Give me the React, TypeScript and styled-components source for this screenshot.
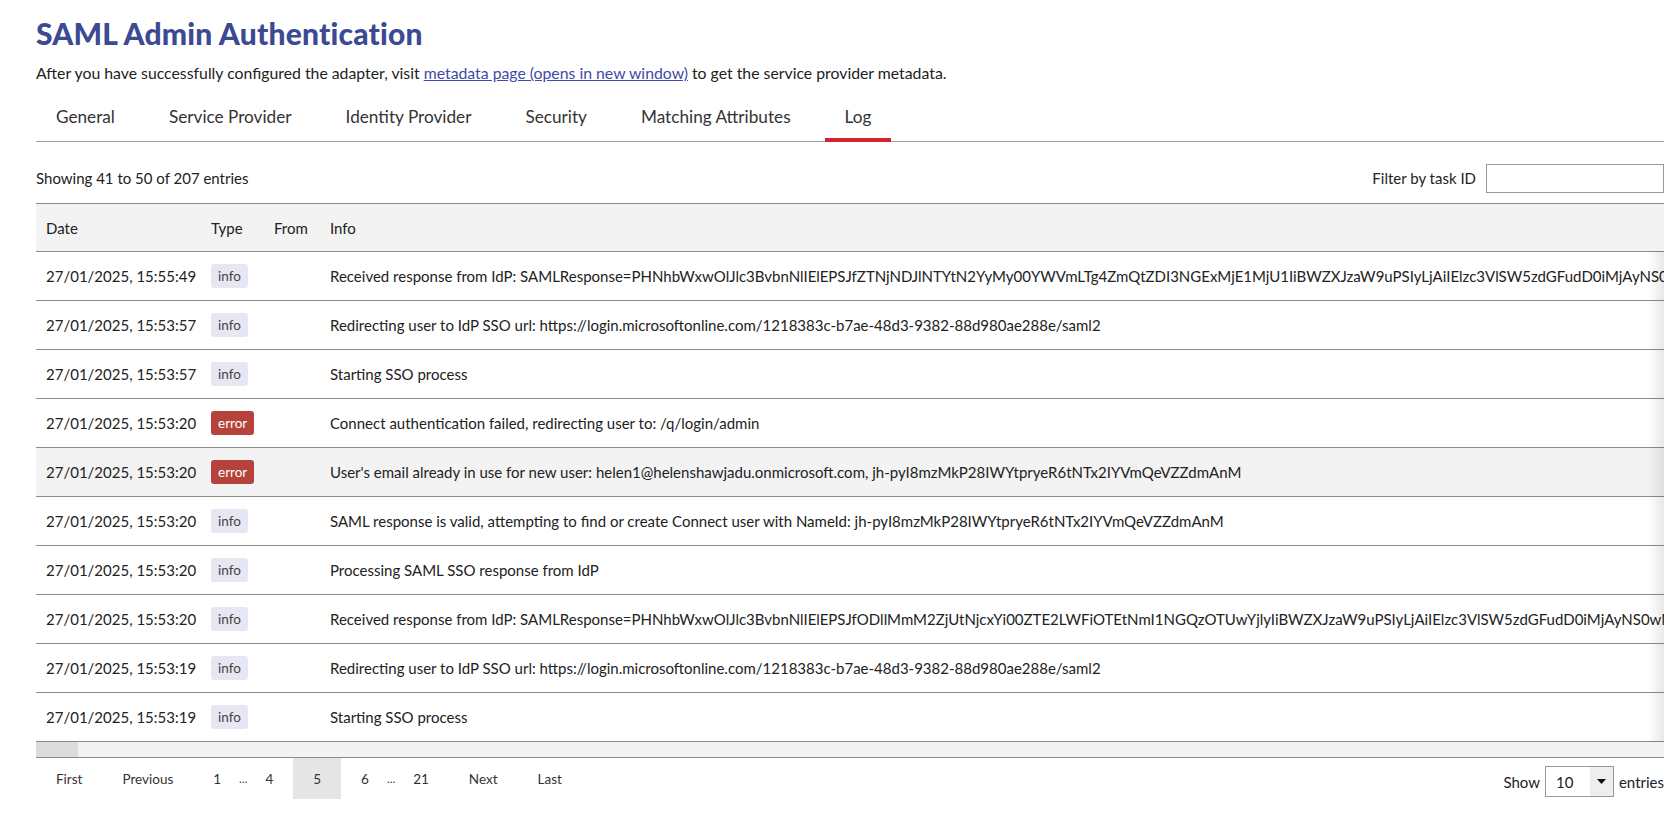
import * as React from "react"
import styled, { createGlobalStyle, css } from "styled-components"

const GlobalStyle = createGlobalStyle`
    body {
        margin: 0;
        background: #fff;
        color: #222;
        font-family: Lato, "Open Sans", Arial, sans-serif;
    }
`

const Page = styled.div`
    padding: 14px 9px 0 36px;
`

const Title = styled.h1`
    margin: 0;
    font-family: Lato, sans-serif;
    font-weight: 900;
    font-size: 30px;
    line-height: 38px;
    color: #3c4a93;
    letter-spacing: 0.2px;
`

const Intro = styled.p`
    margin: 11px 0 0;
    font-size: 15.8px;
    line-height: 20px;
    color: #222;

    a {
        color: #3e4aa6;
        text-decoration: underline;
    }
`

const TabBar = styled.nav`
    display: flex;
    gap: 14px;
    margin-top: 14px;
    border-bottom: 1px solid #a3a3a3;
`

const Tab = styled.div<{ $active?: boolean }>`
    position: relative;
    padding: 10px 20px 14px;
    font-size: 17.2px;
    line-height: 20px;
    color: #333;
    cursor: pointer;

    ${(p) =>
        p.$active &&
        css`
            &::after {
                content: "";
                position: absolute;
                left: 0;
                right: 0;
                bottom: -1px;
                height: 4px;
                background: #d7232f;
            }
        `}
`

const Toolbar = styled.div`
    display: flex;
    align-items: center;
    justify-content: space-between;
    margin-top: 21px;
    height: 30px;
    font-size: 15px;
`

const FilterLabel = styled.label`
    display: flex;
    align-items: center;
    gap: 10px;
    font-size: 15px;
`

const FilterInput = styled.input`
    width: 178px;
    height: 29px;
    box-sizing: border-box;
    border: 1px solid #999;
    border-radius: 0;
    padding: 0 6px;
    font: inherit;
`

const TableWrap = styled.div`
    position: relative;
    margin-top: 10px;
    overflow: hidden;
`

const RightShadow = styled.div`
    position: absolute;
    top: 48px;
    right: 0;
    bottom: 0;
    width: 16px;
    background: linear-gradient(to right, rgba(0, 0, 0, 0), rgba(0, 0, 0, 0.09));
    pointer-events: none;
`

const Table = styled.table`
    width: 100%;
    table-layout: fixed;
    border-collapse: collapse;
    font-size: 15px;
`

const HeadCell = styled.th<{ $w?: number }>`
    width: ${(p) => (p.$w ? `${p.$w}px` : "auto")};
    height: 47px;
    padding: 0 10px;
    text-align: left;
    font-weight: 400;
    color: #222;
    background: #f3f3f3;
    border-top: 1px solid #8c8c8c;
    border-bottom: 1px solid #8c8c8c;
`

const Row = styled.tr<{ $hl?: boolean }>`
    background: ${(p) => (p.$hl ? "#f3f3f3" : "#fff")};
    border-bottom: 1px solid #8c8c8c;
`

const Cell = styled.td`
    height: 48px;
    padding: 0 10px;
    white-space: nowrap;
    color: #222;
`

const Badge = styled.span<{ $kind: "info" | "error" }>`
    display: inline-block;
    height: 24px;
    line-height: 24px;
    padding: 0 7px;
    border-radius: 3px;
    font-size: 13.5px;
    background: ${(p) => (p.$kind === "error" ? "#b5433b" : "#e6e7f3")};
    color: ${(p) => (p.$kind === "error" ? "#fff" : "#444")};
`

const ScrollTrack = styled.div`
    height: 15px;
    background: #f3f3f3;
    border-bottom: 1px solid #8c8c8c;
`

const ScrollThumb = styled.div`
    width: 42px;
    height: 100%;
    background: #dcdcdc;
`

const Footer = styled.div`
    display: flex;
    align-items: center;
    justify-content: space-between;
`

const Pager = styled.div`
    display: flex;
    align-items: stretch;
    height: 41px;
    font-size: 13.5px;
    color: #333;
`

const PageBtn = styled.span<{ $active?: boolean }>`
    display: flex;
    align-items: center;
    padding: 0 20px;
    background: ${(p) => (p.$active ? "#e6e6e6" : "transparent")};
    cursor: pointer;
`

const Dots = styled.span`
    display: flex;
    align-items: center;
    margin: 0 -2px;
    font-size: 11px;
`

const LengthControl = styled.div`
    display: flex;
    align-items: center;
    gap: 5px;
    margin-top: 6px;
    font-size: 15px;
`

const Select = styled.div`
    display: flex;
    width: 69px;
    height: 31px;
    box-sizing: border-box;
    border: 1px solid #999;
`

const SelectValue = styled.span`
    flex: 1;
    display: flex;
    align-items: center;
    padding-left: 10px;
`

const SelectArrow = styled.span`
    width: 23px;
    display: flex;
    align-items: center;
    justify-content: center;
    background: #eee;
`

const samlA =
    "PHNhbWxwOlJlc3BvbnNlIElEPSJfZTNjNDJlNTYtN2YyMy00YWVmLTg4ZmQtZDI3NGExMjE1MjU1IiBWZXJzaW9uPSIyLjAiIElzc3VlSW5zdGFudD0iMjAyNS0wMS0yN1QxNTo1NTo0OC45ODNaIiBEZXN0aW5hdGlvbj0iaHR0cHM6Ly9jb25uZWN0LmV4YW1wbGUuY29tL3Evc2FtbC9hY3MiIEluUmVzcG9uc2VUbz0iX2E0ZjE"
const samlB =
    "PHNhbWxwOlJlc3BvbnNlIElEPSJfODllMmM2ZjUtNjcxYi00ZTE2LWFiOTEtNmI1NGQzOTUwYjlyIiBWZXJzaW9uPSIyLjAiIElzc3VlSW5zdGFudD0iMjAyNS0wMS0yN1QxNTo1MzoyMC4xMjdaIiBEZXN0aW5hdGlvbj0iaHR0cHM6Ly9jb25uZWN0LmV4YW1wbGUuY29tL3Evc2FtbC9hY3MiIEluUmVzcG9uc2VUbz0iX2I3YzI"
const ssoUrl =
    "Redirecting user to IdP SSO url: https://login.microsoftonline.com/1218383c-b7ae-48d3-9382-88d980ae288e/saml2"
const nameId = "jh-pyI8mzMkP28IWYtpryeR6tNTx2IYVmQeVZZdmAnM"

const rows: { date: string; type: "info" | "error"; info: string }[] = [
    { date: "27/01/2025, 15:55:49", type: "info", info: "Received response from IdP: SAMLResponse=" + samlA },
    { date: "27/01/2025, 15:53:57", type: "info", info: ssoUrl },
    { date: "27/01/2025, 15:53:57", type: "info", info: "Starting SSO process" },
    { date: "27/01/2025, 15:53:20", type: "error", info: "Connect authentication failed, redirecting user to: /q/login/admin" },
    {
        date: "27/01/2025, 15:53:20",
        type: "error",
        info: "User's email already in use for new user: helen1@helenshawjadu.onmicrosoft.com, " + nameId,
    },
    {
        date: "27/01/2025, 15:53:20",
        type: "info",
        info: "SAML response is valid, attempting to find or create Connect user with NameId: " + nameId,
    },
    { date: "27/01/2025, 15:53:20", type: "info", info: "Processing SAML SSO response from IdP" },
    { date: "27/01/2025, 15:53:20", type: "info", info: "Received response from IdP: SAMLResponse=" + samlB },
    { date: "27/01/2025, 15:53:19", type: "info", info: ssoUrl },
    { date: "27/01/2025, 15:53:19", type: "info", info: "Starting SSO process" },
]

const tabs = ["General", "Service Provider", "Identity Provider", "Security", "Matching Attributes", "Log"]

export default function App() {
    return (
        <Page>
            <GlobalStyle />
            <Title>SAML Admin Authentication</Title>
            <Intro>
                After you have successfully configured the adapter, visit{" "}
                <a href="#">metadata page (opens in new window)</a> to get the service provider metadata.
            </Intro>

            <TabBar>
                {tabs.map((t) => (
                    <Tab key={t} $active={t === "Log"}>
                        {t}
                    </Tab>
                ))}
            </TabBar>

            <Toolbar>
                <span>Showing 41 to 50 of 207 entries</span>
                <FilterLabel>
                    Filter by task ID
                    <FilterInput type="text" />
                </FilterLabel>
            </Toolbar>

            <TableWrap>
                <Table>
                    <thead>
                        <tr>
                            <HeadCell $w={145}>Date</HeadCell>
                            <HeadCell $w={43}>Type</HeadCell>
                            <HeadCell $w={36}>From</HeadCell>
                            <HeadCell>Info</HeadCell>
                        </tr>
                    </thead>
                    <tbody>
                        {rows.map((r, i) => (
                            <Row key={i} $hl={i === 4}>
                                <Cell>{r.date}</Cell>
                                <Cell>
                                    <Badge $kind={r.type}>{r.type}</Badge>
                                </Cell>
                                <Cell />
                                <Cell>{r.info}</Cell>
                            </Row>
                        ))}
                    </tbody>
                </Table>
                <RightShadow />
            </TableWrap>
            <ScrollTrack>
                <ScrollThumb />
            </ScrollTrack>

            <Footer>
                <Pager>
                    <PageBtn>First</PageBtn>
                    <PageBtn>Previous</PageBtn>
                    <PageBtn>1</PageBtn>
                    <Dots>…</Dots>
                    <PageBtn>4</PageBtn>
                    <PageBtn $active>5</PageBtn>
                    <PageBtn>6</PageBtn>
                    <Dots>…</Dots>
                    <PageBtn>21</PageBtn>
                    <PageBtn>Next</PageBtn>
                    <PageBtn>Last</PageBtn>
                </Pager>
                <LengthControl>
                    Show
                    <Select>
                        <SelectValue>10</SelectValue>
                        <SelectArrow>
                            <svg width="9" height="5" viewBox="0 0 9 5">
                                <path d="M0 0h9L4.5 5z" fill="#111" />
                            </svg>
                        </SelectArrow>
                    </Select>
                    entries
                </LengthControl>
            </Footer>
        </Page>
    )
}
